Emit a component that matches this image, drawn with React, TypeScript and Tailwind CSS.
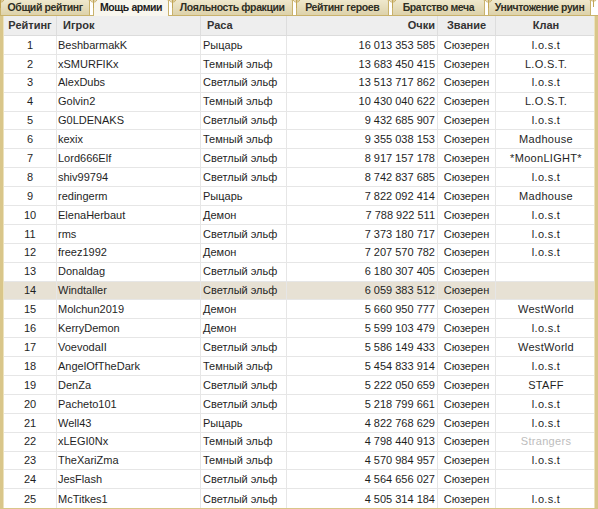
import React from "react";

type Row = [number, string, string, string, string];

const rows: Row[] = [
  [1, "BeshbarmakK", "Рыцарь", "16 013 353 585", "l.o.s.t"],
  [2, "xSMURFIKx", "Темный эльф", "13 683 450 415", "L.O.S.T."],
  [3, "AlexDubs", "Светлый эльф", "13 513 717 862", "l.o.s.t"],
  [4, "Golvin2", "Темный эльф", "10 430 040 622", "L.O.S.T."],
  [5, "G0LDENAKS", "Светлый эльф", "9 432 685 907", "l.o.s.t"],
  [6, "kexix", "Темный эльф", "9 355 038 153", "Madhouse"],
  [7, "Lord666Elf", "Светлый эльф", "8 917 157 178", "*MoonLIGHT*"],
  [8, "shiv99794", "Светлый эльф", "8 742 837 685", "l.o.s.t"],
  [9, "redingerm", "Рыцарь", "7 822 092 414", "Madhouse"],
  [10, "ElenaHerbaut", "Демон", "7 788 922 511", "l.o.s.t"],
  [11, "rms", "Светлый эльф", "7 373 180 717", "l.o.s.t"],
  [12, "freez1992", "Демон", "7 207 570 782", "l.o.s.t"],
  [13, "Donaldag", "Светлый эльф", "6 180 307 405", ""],
  [14, "Windtaller", "Светлый эльф", "6 059 383 512", ""],
  [15, "Molchun2019", "Демон", "5 660 950 777", "WestWorld"],
  [16, "KerryDemon", "Демон", "5 599 103 479", "l.o.s.t"],
  [17, "VoevodaII", "Светлый эльф", "5 586 149 433", "WestWorld"],
  [18, "AngelOfTheDark", "Темный эльф", "5 454 833 914", "l.o.s.t"],
  [19, "DenZa", "Светлый эльф", "5 222 050 659", "STAFF"],
  [20, "Pacheto101", "Светлый эльф", "5 218 799 661", "l.o.s.t"],
  [21, "Well43", "Рыцарь", "4 822 768 629", "l.o.s.t"],
  [22, "xLEGI0Nx", "Темный эльф", "4 798 440 913", "Strangers"],
  [23, "TheXariZma", "Темный эльф", "4 570 984 957", "l.o.s.t"],
  [24, "JesFlash", "Светлый эльф", "4 564 656 027", ""],
  [25, "McTitkes1", "Светлый эльф", "4 505 314 184", "l.o.s.t"],
];

const tabs = [
  { label: "Общий рейтинг", w: "w-[92px]", active: false },
  { label: "Мощь армии", w: "w-[77px]", active: true },
  { label: "Лояльность фракции", w: "w-[123px]", active: false },
  { label: "Рейтинг героев", w: "w-[95px]", active: false },
  { label: "Братство меча", w: "w-[95px]", active: false },
  { label: "Уничтожение руин", w: "w-[105px]", active: false },
];

function Ornament() {
  return (
    <svg
      width="9"
      height="9"
      viewBox="0 0 9 9"
      className="absolute -left-[5px] -top-[1px]"
    >
      <path
        d="M4.5 9 V2 M4.5 3 C3 3 1.5 2.5 1.5 1.2 C1.5 0.4 2.6 0.4 2.6 1.3 M4.5 3 C6 3 7.5 2.5 7.5 1.2 C7.5 0.4 6.4 0.4 6.4 1.3"
        stroke="#c2a657"
        strokeWidth="1"
        fill="none"
      />
      <circle cx="4.5" cy="1.3" r="1" fill="#c2a657" />
    </svg>
  );
}

const grid = "grid grid-cols-[53px_144px_86px_151px_58px_100px]";

export default function App() {
  return (
    <div
      className="w-[598px] h-[509px] bg-white overflow-hidden text-[11px] text-[#1f1f1f]"
      style={{ fontFamily: '"Liberation Sans", Arial, sans-serif' }}
    >
      {/* Tabs */}
      <div className="flex h-[16px] items-end gap-[3px] bg-white border-b border-[#c9b26c]">
        {tabs.map((t) => (
          <div
            key={t.label}
            className={`relative ${t.w} h-[16px] flex items-center justify-center border-x border-t border-[#c9b26c] rounded-t-[2px] font-bold text-[10.5px] tracking-[-0.4px] whitespace-nowrap ${
              t.active
                ? "bg-[#f8f6ee] text-[#202020] -mb-px h-[17px] pb-px"
                : "bg-gradient-to-b from-[#efe8cd] to-[#ddd2aa] text-[#2e2e24]"
            }`}
          >
            <Ornament />
            {t.label}
          </div>
        ))}
        <div className="relative w-[4px] h-[16px]">
          <Ornament />
        </div>
      </div>

      {/* Table */}
      <div className="border-x-[3px] border-b-[3px] border-[#d9c68a]">
        <div className="border-l border-r border-[#ece2bd]">
          <div
            className={`${grid} h-[20px] bg-[#eeeeee] border-b border-[#dcdcdc] font-bold text-[#333]`}
          >
            <div className="flex items-center justify-center border-r border-[#dddddd]">
              Рейтинг
            </div>
            <div className="flex items-center pl-[6px] border-r border-[#dddddd]">
              Игрок
            </div>
            <div className="flex items-center pl-[6px] border-r border-[#dddddd]">
              Раса
            </div>
            <div className="flex items-center justify-end pr-[2px] border-r border-[#dddddd]">
              Очки
            </div>
            <div className="flex items-center justify-center border-r border-[#dddddd]">
              Звание
            </div>
            <div className="flex items-center justify-center">Клан</div>
          </div>
          {rows.map(([n, name, race, pts, clan]) => (
            <div
              key={n}
              className={`${grid} h-[18.9px] border-b border-[#e6e6e6] ${
                n === 14 ? "bg-[#e7e1d4]" : "bg-white"
              } last:border-b-0`}
            >
              <div className="flex items-center justify-center border-r border-[#e6e6e6]">
                {n}
              </div>
              <div className="flex items-center pl-[1px] border-r border-[#e6e6e6] whitespace-nowrap">
                {name}
              </div>
              <div className="flex items-center pl-[2px] border-r border-[#e6e6e6] whitespace-nowrap">
                {race}
              </div>
              <div className="flex items-center justify-end pr-[2px] border-r border-[#e6e6e6]">
                {pts}
              </div>
              <div className="flex items-center justify-center border-r border-[#e6e6e6]">
                Сюзерен
              </div>
              <div
                className={`flex items-center justify-center tracking-[0.3px] ${
                  clan === "Strangers" ? "text-[#bdbdbd]" : ""
                }`}
              >
                {clan}
              </div>
            </div>
          ))}
        </div>
      </div>
    </div>
  );
}
